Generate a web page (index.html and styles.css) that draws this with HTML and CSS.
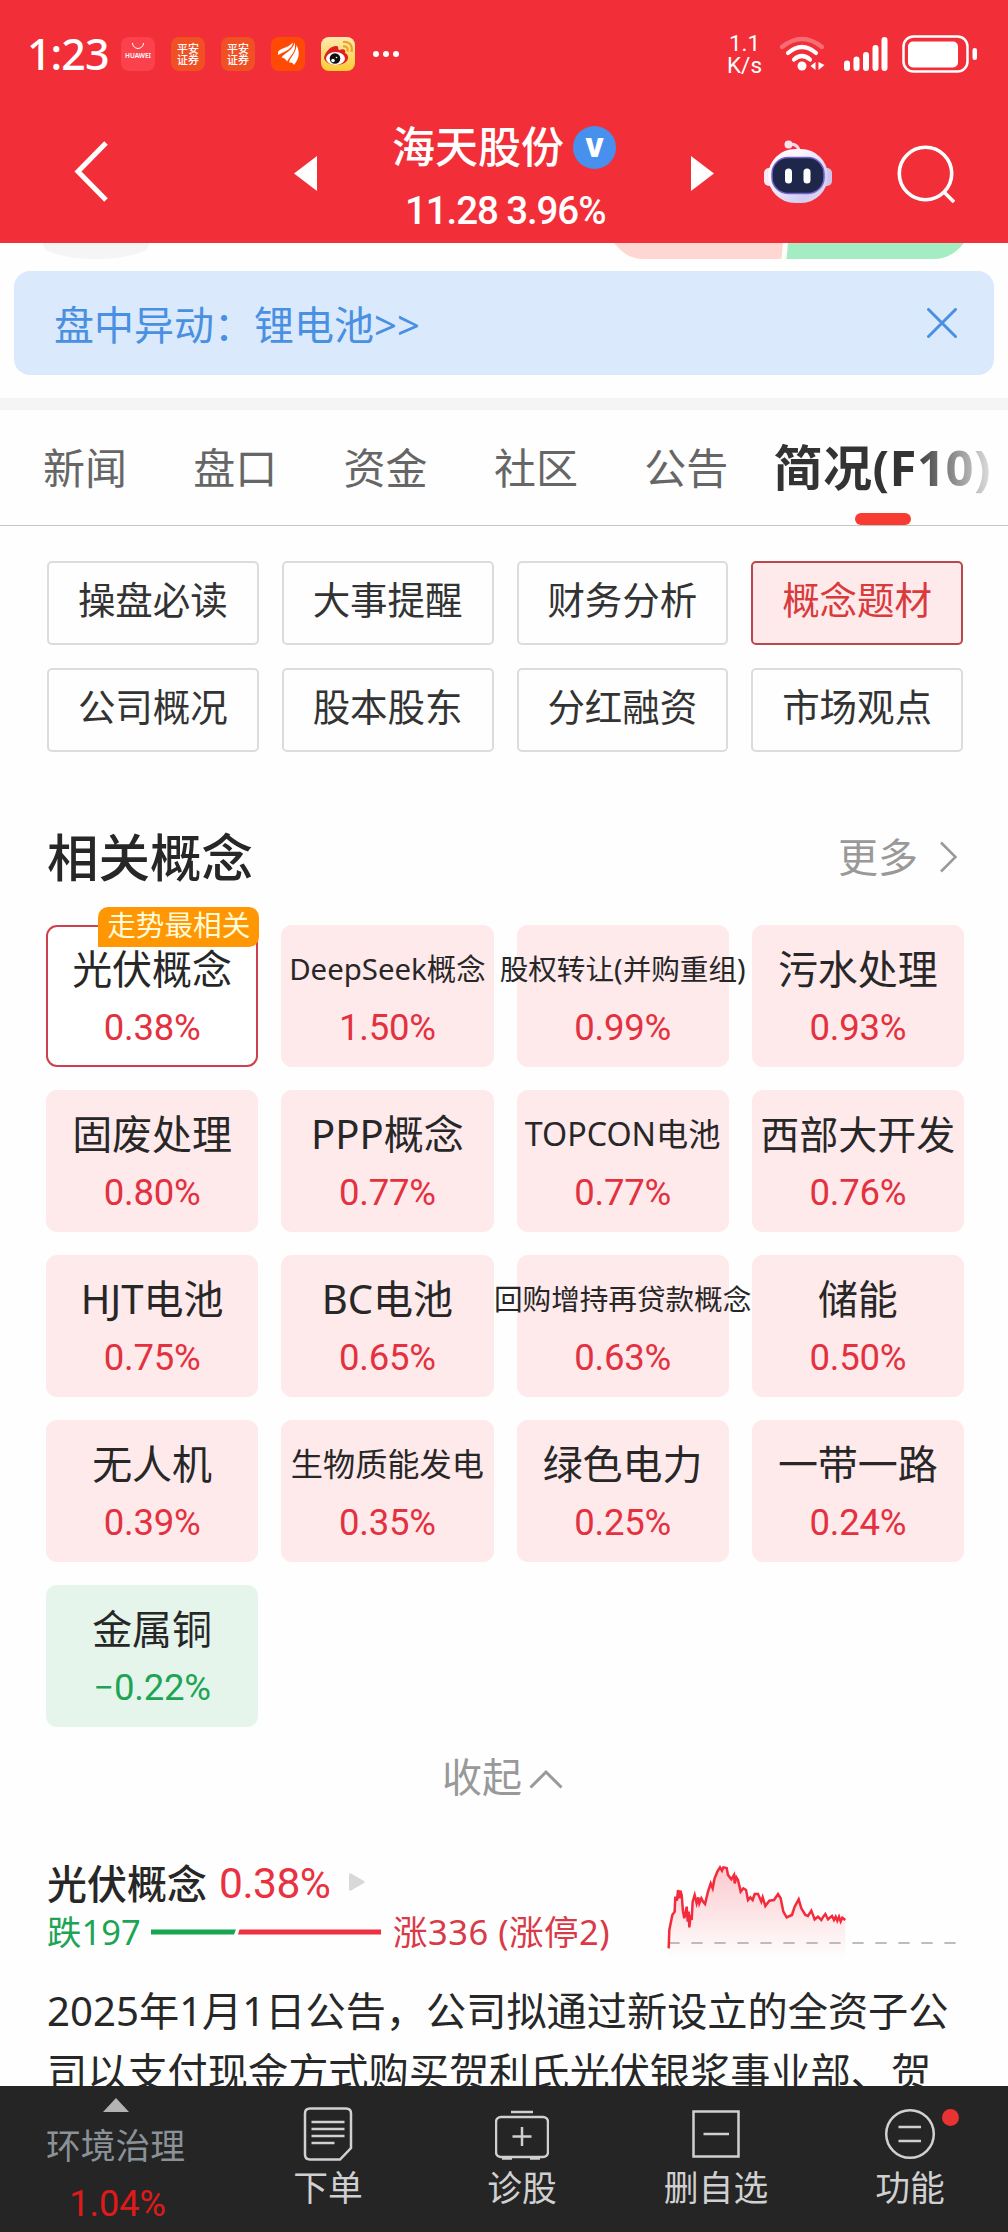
FILE: index.html
```html
<!DOCTYPE html>
<html lang="zh-CN">
<head>
    <meta charset="UTF-8">
    <meta name="viewport" content="width=device-width, initial-scale=1.0">
    <title>海天股份</title>
    <link rel="stylesheet" href="styles.css">
</head>
<body>
    <div class="phone">
        <div class="top">
            <!-- Status bar -->
            <div class="status-bar">
                <span class="time">1:23</span>
                <div class="app-icons">
                    <div class="app-icon huawei">
                        <svg width="14" height="8" viewBox="0 0 14 8" fill="none" stroke="#fff" stroke-width="1"><path d="M1.500 1a5.500 5.500 0 0 0 11 0"/></svg>
                        <span>HUAWEI</span>
                    </div>
                    <div class="app-icon pingan">平安<br>证券</div>
                    <div class="app-icon pingan">平安<br>证券</div>
                    <div class="app-icon eastmoney">
                        <svg width="34" height="34" viewBox="0 0 34 34" fill="#fff">
                            <path d="M7 15.500C8 11 16 12 22 5.500C21 12 15 14 7 18z"/>
                            <path d="M10.500 20.500C13 16 22 14 23.500 5.500C26 14 20 18 16 24.500C15 22 13 21 10.500 20.500z"/>
                            <path d="M18 25.500C19 20 25 17 25.500 8C30 17 27 23 23 28C22 26 20.500 25.500 18 25.500z"/>
                        </svg>
                    </div>
                    <div class="app-icon weibo">
                        <svg width="34" height="34" viewBox="0 0 34 34">
                            <path d="M3 21C4 14 11 8 16 9C18 10 17 13 18 13C23 11 25 13 24 16C28 18 28 22 25 25C19 30 5 29 3 21z" fill="#e01f25"/>
                            <ellipse cx="14.500" cy="21.500" rx="9.500" ry="6.500" fill="#fff"/>
                            <circle cx="14" cy="21.500" r="5.300" fill="#111"/>
                            <circle cx="12" cy="23.500" r="1.800" fill="#fff"/>
                            <circle cx="15.500" cy="20.500" r="0.800" fill="#fff"/>
                            <path d="M22 5C28 4 32 8 30.500 15M22 9.500C25.500 9 27.500 11 26.500 14.500" fill="none" stroke="#eba32c" stroke-width="2.200"/>
                        </svg>
                    </div>
                </div>
                <div class="dots"><i></i><i></i><i></i></div>
                <div class="net-speed"><span>1.1</span><span>K/s</span></div>
                <svg class="wifi" width="46" height="38" viewBox="0 0 46 38" fill="none" stroke="#fff" stroke-width="4.200" stroke-linecap="round">
                    <path d="M3 12Q23 -4 43 12" stroke-opacity="0.3"/>
                    <path d="M9 18Q23 6 37 18"/>
                    <path d="M15 24.500Q23 17.500 31 24.500"/>
                    <circle cx="23" cy="31" r="4.500" fill="#fff" stroke="none"/>
                    <path d="M36.500 27v8l-5-4zM39.500 27v8l6-5z" fill="#fff" stroke="none"/>
                </svg>
                <svg class="signal" width="44" height="36" viewBox="0 0 44 36" stroke="#fff" stroke-width="6" stroke-linecap="round">
                    <path d="M3 27.500v4.500M12.500 23.500v8.500M22 19v13M31.500 12v20M40.500 4v28"/>
                </svg>
                <svg class="battery" width="76" height="38" viewBox="0 0 76 38">
                    <rect x="1.500" y="1.500" width="64" height="35" rx="10" fill="none" stroke="#fff" stroke-width="2.500"/>
                    <rect x="6" y="6.500" width="50" height="26" rx="5" fill="#fff"/>
                    <rect x="70.500" y="13" width="4.500" height="12" rx="2.200" fill="#fff"/>
                </svg>
            </div>

            <!-- Stock header -->
            <div class="stock-header">
                <svg class="back" width="36" height="66" viewBox="0 0 36 66" fill="none" stroke="#fff" stroke-width="5"><path d="M33 4L5 32.500L33 61"/></svg>
                <svg class="prev" width="23" height="35" viewBox="0 0 23 35" fill="#fff"><path d="M23 0v35L0 17.500z"/></svg>
                <div class="stock-title">
                    <div class="stock-name">海天股份<span class="verified">V</span></div>
                    <div class="stock-price">11.28 3.96%</div>
                </div>
                <svg class="next" width="23" height="35" viewBox="0 0 23 35" fill="#fff"><path d="M0 0v35L23 17.500z"/></svg>
                <svg class="robot" width="70" height="64" viewBox="0 0 70 64">
                    <defs>
                        <linearGradient id="shell" x1="0" y1="0" x2="1" y2="1">
                            <stop offset="0.300" stop-color="#fdf6fd"/>
                            <stop offset="0.750" stop-color="#cfcdf2"/>
                            <stop offset="1" stop-color="#f5dcee"/>
                        </linearGradient>
                    </defs>
                    <path d="M36 12Q36 4 27 4" fill="none" stroke="#f5d5e6" stroke-width="3"/>
                    <circle cx="25.500" cy="4.500" r="4" fill="#fbe3ee"/>
                    <rect x="1" y="28" width="12" height="18" rx="5" fill="#f6e8f5"/>
                    <rect x="57" y="28" width="12" height="18" rx="5" fill="#cfc3ea"/>
                    <rect x="5" y="9" width="60" height="54" rx="27" fill="url(#shell)"/>
                    <rect x="9" y="17.500" width="52" height="36" rx="16" fill="#1e2749" stroke="#7363cf" stroke-width="1.500"/>
                    <rect x="22" y="28.500" width="7" height="15" rx="3.500" fill="#fff"/>
                    <rect x="40.500" y="28.500" width="7" height="15" rx="3.500" fill="#fff"/>
                </svg>
                <svg class="search" width="58" height="58" viewBox="0 0 58 58" fill="none" stroke="#fff" stroke-width="3.600"><circle cx="28.500" cy="28.500" r="26.200"/><path d="M46 46L57 57"/></svg>
            </div>
        </div>

        <!-- Bottom edges of the buttons scrolled under the header -->
        <div class="scrolled-row">
            <div class="pill-gray"></div>
            <svg width="370" height="16" viewBox="0 0 370 16">
                <path d="M4 0H173L171.500 16H34C21 16 12 10 4 0z" fill="#fed7d3"/>
                <path d="M178 0H354C346 10 336 16 324 16H176.500z" fill="#a4edc2"/>
            </svg>
        </div>

        <div class="notice">
            <span>盘中异动：锂电池&gt;&gt;</span>
            <svg width="30" height="30" viewBox="0 0 30 30" stroke="#4a90e2" stroke-width="3" stroke-linecap="round"><path d="M1.500 1.500L28.500 28.500M28.500 1.500L1.500 28.500"/></svg>
        </div>

        <div class="tabs">
            <span class="tab">新闻</span>
            <span class="tab">盘口</span>
            <span class="tab">资金</span>
            <span class="tab">社区</span>
            <span class="tab">公告</span>
            <span class="tab active"><b>简况(F10)</b></span>
        </div>

        <div class="filters">
            <div class="filter">操盘必读</div>
            <div class="filter">大事提醒</div>
            <div class="filter">财务分析</div>
            <div class="filter selected">概念题材</div>
            <div class="filter">公司概况</div>
            <div class="filter">股本股东</div>
            <div class="filter">分红融资</div>
            <div class="filter">市场观点</div>
        </div>

        <div class="section-header">
            <h2>相关概念</h2>
            <span class="more">更多</span>
            <svg width="19" height="32" viewBox="0 0 19 32" fill="none" stroke="#999" stroke-width="2.500"><path d="M2 1.500L16.500 16L2 30.500"/></svg>
        </div>

        <div class="concepts">
            <div class="concept current"><span class="badge">走势最相关</span><div class="name">光伏概念</div><div class="pct">0.38%</div></div>
            <div class="concept"><div class="name deepseek">DeepSeek概念</div><div class="pct">1.50%</div></div>
            <div class="concept"><div class="name small">股权转让(并购重组)</div><div class="pct">0.99%</div></div>
            <div class="concept"><div class="name">污水处理</div><div class="pct">0.93%</div></div>
            <div class="concept"><div class="name">固废处理</div><div class="pct">0.80%</div></div>
            <div class="concept"><div class="name">PPP概念</div><div class="pct">0.77%</div></div>
            <div class="concept"><div class="name mid">TOPCON电池</div><div class="pct">0.77%</div></div>
            <div class="concept"><div class="name wide">西部大开发</div><div class="pct">0.76%</div></div>
            <div class="concept"><div class="name">HJT电池</div><div class="pct">0.75%</div></div>
            <div class="concept"><div class="name">BC电池</div><div class="pct">0.65%</div></div>
            <div class="concept"><div class="name small">回购增持再贷款概念</div><div class="pct">0.63%</div></div>
            <div class="concept"><div class="name">储能</div><div class="pct">0.50%</div></div>
            <div class="concept"><div class="name">无人机</div><div class="pct">0.39%</div></div>
            <div class="concept"><div class="name mid">生物质能发电</div><div class="pct">0.35%</div></div>
            <div class="concept"><div class="name">绿色电力</div><div class="pct">0.25%</div></div>
            <div class="concept"><div class="name">一带一路</div><div class="pct">0.24%</div></div>
            <div class="concept down"><div class="name">金属铜</div><div class="pct">−0.22%</div></div>
        </div>

        <div class="collapse">
            <span>收起</span>
            <svg width="34" height="20" viewBox="0 0 34 20" fill="none" stroke="#999" stroke-width="3"><path d="M1.500 18.500L17 3L32.500 18.500"/></svg>
        </div>

        <!-- Concept detail -->
        <div class="detail">
            <div class="detail-info">
                <div class="detail-title">
                    <b>光伏概念</b>
                    <span class="detail-pct">0.38%</span>
                    <svg width="16" height="18" viewBox="0 0 16 18" fill="#d8d8d8"><path d="M0 1.500Q0 0 2 0.500L15 8Q16.500 9 15 10L2 17.500Q0 18 0 16.500z"/></svg>
                </div>
                <div class="detail-count">
                    <span class="fall">跌197</span>
                    <svg class="ratio" width="230" height="6" viewBox="0 0 230 6"><path d="M0 0.500H85L83 5.500H0z" fill="#1aa650"/><path d="M88.500 0.500H230V5.500H87z" fill="#ef2f42"/></svg>
                    <span class="rise">涨336 (涨停2)</span>
                </div>
            </div>
            <svg class="chart" width="298" height="100" viewBox="480 60 894 300">
                <defs>
                    <linearGradient id="area" x1="0" y1="0" x2="0" y2="1">
                        <stop offset="0" stop-color="#f42b3c" stop-opacity="0.250"/>
                        <stop offset="1" stop-color="#f42b3c" stop-opacity="0"/>
                    </linearGradient>
                </defs>
                <path fill="url(#area)" d="M494 325L505 225L522 150L542 230L556 250L572 175L603 192L620 130L648 82L668 84L682 118L702 120L732 180L752 162L784 198L822 162L848 232L884 178L904 225L932 238L1024 240V355H494z"/>
                <path d="M497 309H1356" stroke="#a8a8a8" stroke-width="5" stroke-dasharray="34 35" stroke-dashoffset="4"/>
                <polyline fill="none" stroke="#f42b3c" stroke-width="7.500" points="494,325 496,270 505,225 512,215 514,170 519,182 522,150 526,175 529,152 533,165 537,215 541,235 545,215 548,200 551,245 554,215 556,262 560,225 563,240 566,185 572,165 578,190 583,172 586,190 592,175 597,185 603,192 612,155 620,130 626,145 632,115 640,95 648,82 654,92 658,82 668,84 672,105 682,118 690,105 692,130 697,112 702,120 710,155 718,145 726,150 732,180 739,172 746,180 752,162 762,162 772,185 776,172 784,198 796,182 810,180 822,162 830,175 838,215 848,232 864,225 872,200 884,178 892,205 904,225 912,228 922,212 932,238 942,230 952,240 958,230 964,222 972,238 984,228 990,240 995,230 1000,242 1005,230 1010,244 1015,233 1024,240"/>
            </svg>
        </div>

        <p class="detail-text">2025年1月1日公告，公司拟通过新设立的全资子公<br>司以支付现金方式购买贺利氏光伏银浆事业部、贺</p>

        <!-- Bottom bar -->
        <div class="bottom-bar">
            <div class="sector">
                <svg width="26" height="14" viewBox="0 0 26 14" fill="#b3b3b3"><path d="M13 0L26 14H0z"/></svg>
                <span class="sector-name">环境治理</span>
                <span class="sector-pct">1.04%</span>
            </div>
            <div class="action">
                <svg width="54" height="54" viewBox="0 0 54 54" fill="none" stroke="#d0d0d0" stroke-width="2.500">
                    <path d="M9 1.500H45Q50 1.500 50 6.500V41L39 52.500H9Q4 52.500 4 47.500V6.500Q4 1.500 9 1.500z"/>
                    <path d="M10.500 15H43.500M10.500 22H43.500M10.500 29H43.500M10.500 36H33.500"/>
                </svg>
                <span>下单</span>
            </div>
            <div class="action">
                <svg width="54" height="54" viewBox="0 0 54 54" fill="none" stroke="#d0d0d0" stroke-width="2.500">
                    <path d="M16 5H38"/>
                    <rect x="1" y="10" width="52" height="40" rx="5"/>
                    <path d="M27 20V39M17.500 29.500H36.500M7 51.500H17M35 51.500H45"/>
                </svg>
                <span>诊股</span>
            </div>
            <div class="action">
                <svg width="54" height="54" viewBox="0 0 54 54" fill="none" stroke="#d0d0d0" stroke-width="2.500">
                    <rect x="4.500" y="4.500" width="45" height="45"/>
                    <path d="M14.500 27H40"/>
                </svg>
                <span>删自选</span>
            </div>
            <div class="action">
                <svg width="54" height="54" viewBox="0 0 54 54" fill="none" stroke="#d0d0d0" stroke-width="2.500">
                    <circle cx="27" cy="27" r="23.800"/>
                    <path d="M15.500 20H38M15.500 34H38"/>
                </svg>
                <span>功能</span>
                <i class="red-dot"></i>
            </div>
        </div>
    </div>
</body>
</html>
```

FILE: styles.css
```css
body {
    margin: 0;
    background: #fff;
    font-family: "Noto Sans", "Noto Sans CJK SC", sans-serif;
    color: #272727;
}

svg {
    display: block;
    flex: none;
}

.phone {
    width: 1008px;
    height: 2232px;
    overflow: hidden;
    display: flex;
    flex-direction: column;
    background: #fefefe;
}

.phone > div {
    flex: none;
}

/* Status bar */
.top {
    height: 243px;
    background: #f22f38;
    color: #fff;
}

.status-bar {
    display: flex;
    align-items: center;
    height: 108px;
    padding-left: 27px;
}

.time {
    width: 94px;
    font-size: 43px;
    font-weight: 500;
    line-height: 60px;
    letter-spacing: -1px;
}

.app-icons {
    display: flex;
    gap: 16px;
}

.app-icon {
    width: 34px;
    height: 34px;
    border-radius: 8px;
    overflow: hidden;
}

.huawei {
    display: flex;
    flex-direction: column;
    align-items: center;
    background: #fb424c;
    padding-top: 5px;
    height: 29px;
    font-size: 6.500px;
    line-height: 12px;
    font-weight: 600;
}

.pingan {
    background: #f15025;
    font-size: 11px;
    line-height: 11px;
    padding-top: 6px;
    height: 28px;
    text-align: center;
    font-weight: 500;
}

.eastmoney {
    background: #ff4a06;
}

.weibo {
    background: linear-gradient(#fdeab0, #fccc32);
}

.dots {
    display: flex;
    gap: 4px;
    margin-left: 18px;
    width: 355px;
}

.dots i {
    width: 6px;
    height: 6px;
    border-radius: 50%;
    background: #fff;
}

.net-speed {
    display: flex;
    flex-direction: column;
    width: 33px;
    margin-right: 18px;
    align-items: center;
    font-family: Roboto, sans-serif;
    font-size: 22.500px;
    line-height: 22px;
}

.signal {
    margin-left: 19px;
}

.battery {
    margin-left: 14px;
}

/* Stock header */
.stock-header {
    display: flex;
    height: 135px;
}

.back {
    margin: 31px 0 0 73px;
}

.prev {
    margin: 48px 0 0 185px;
}

.stock-title {
    margin-left: 75px;
    width: 299px;
}

.stock-name {
    display: flex;
    align-items: center;
    margin-top: 12px;
    font-size: 43px;
    font-weight: 500;
    line-height: 54px;
}

.verified {
    width: 43px;
    height: 43px;
    margin-left: 9px;
    border-radius: 50%;
    background: #4790ee;
    font-family: "Open Sans", sans-serif;
    font-size: 26px;
    font-weight: 800;
    line-height: 43px;
    text-align: center;
}

.stock-price {
    padding-left: 13px;
    font-family: Roboto, sans-serif;
    font-size: 38.500px;
    font-weight: 500;
    line-height: 48px;
    letter-spacing: -1.100px;
    margin-top: 13px;
    white-space: nowrap;
}

.next {
    margin-top: 48px;
}

.robot {
    margin: 32px 0 0 49px;
}

.search {
    margin: 37px 0 0 64px;
}

/* Scrolled content */
.scrolled-row {
    display: flex;
    justify-content: space-between;
    height: 28px;
    padding: 0 28px 0 43px;
}

.pill-gray {
    width: 106px;
    height: 16px;
    background: #f5f5f5;
    border-radius: 0 0 60px 60px / 0 0 16px 16px;
}

.notice {
    display: flex;
    justify-content: space-between;
    align-items: center;
    height: 104px;
    margin: 0 14px 23px;
    padding: 0 37px 0 40px;
    border-radius: 16px;
    background: #dae9fb;
    color: #4a90e2;
    font-size: 40px;
    box-sizing: border-box;
}

/* Tabs */
.tabs {
    display: flex;
    height: 115px;
    padding-left: 43px;
    border-top: 12px solid #f5f5f5;
    border-bottom: 1px solid #c4c4c4;
    font-size: 42px;
    line-height: 115px;
    color: #666;
}

.tab {
    width: 150.300px;
}

.tab.active {
    display: flex;
    flex-direction: column;
    width: 224px;
    margin-left: -21px;
}

.tab.active b {
    height: 103px;
    line-height: 115px;
    font-size: 49px;
    letter-spacing: 0.500px;
    white-space: nowrap;
    background: linear-gradient(90deg, #333 62%, #e2e2e2 98%);
    -webkit-background-clip: text;
    background-clip: text;
    color: transparent;
}

.tab.active::after {
    content: "";
    width: 56px;
    height: 12px;
    margin-left: 82px;
    border-radius: 6px;
    background: #f93c32;
}

/* Filter buttons */
.filters {
    display: grid;
    grid-template-columns: repeat(4, 1fr);
    grid-auto-rows: 84px;
    gap: 23px;
    padding: 35px 45px 0 47px;
}

.filter {
    border: 2px solid #dcdcdc;
    border-radius: 5px;
    font-size: 37.500px;
    line-height: 74px;
    text-align: center;
    color: #333;
}

.filter.selected {
    border-color: #b9474c;
    background: #feeaea;
    color: #d93a3c;
}

/* Related concepts */
.section-header {
    display: flex;
    align-items: center;
    height: 64px;
    margin-top: 73px;
    padding: 0 50px 0 47px;
}

.section-header h2 {
    flex: 1;
    margin: 0;
    font-size: 51.500px;
    font-weight: 500;
    line-height: 64px;
}

.more {
    margin-right: 21px;
    font-size: 40px;
    color: #999;
    line-height: 64px;
}

.concepts {
    display: grid;
    grid-template-columns: repeat(4, 1fr);
    grid-auto-rows: 142px;
    gap: 23px;
    padding: 36px 44px 0 46px;
}

.concept {
    position: relative;
    display: flex;
    flex-direction: column;
    align-items: center;
    gap: 19px;
    min-width: 0;
    padding-top: 24px;
    border-radius: 11px;
    background: #fee9eb;
}

.concept.current {
    background: #fff;
    box-shadow: inset 0 0 0 2px #d03f4d;
}

.concept.down {
    background: #e5f5ec;
}

.badge {
    position: absolute;
    top: -18px;
    right: -1px;
    width: 161px;
    height: 40px;
    border-radius: 10px 10px 10px 0;
    background: #ff9705;
    color: #fffbd8;
    font-size: 28.600px;
    line-height: 36px;
    text-align: center;
    white-space: nowrap;
}

.name {
    font-size: 40px;
    line-height: 40px;
    white-space: nowrap;
}

.name.small {
    font-size: 28.600px;
}

.name.deepseek {
    font-size: 29.400px;
}

.name.mid {
    font-size: 32.200px;
}

.name.wide {
    font-size: 39px;
}

.pct {
    font-family: Roboto, sans-serif;
    font-size: 36.500px;
    line-height: 40px;
    letter-spacing: -0.200px;
    color: #e33140;
}

.down .pct {
    color: #1ea455;
}

.collapse {
    display: flex;
    align-items: center;
    height: 50px;
    margin-top: 25px;
    padding-left: 442px;
    gap: 7px;
    font-size: 40px;
    line-height: 50px;
    color: #999;
}

.collapse svg {
    margin-top: 3px;
}

/* Concept detail */
.detail {
    display: flex;
    justify-content: space-between;
    height: 110px;
    margin-top: 58px;
    padding: 0 46px 0 47px;
}

.detail-title {
    display: flex;
    align-items: center;
    height: 44px;
    font-size: 40px;
}

.detail-title b {
    font-weight: 500;
}

.detail-pct {
    margin: 2px 18px 0 12px;
    font-family: Roboto, sans-serif;
    font-size: 42.500px;
    letter-spacing: -0.500px;
    color: #e93141;
}

.detail-count {
    display: flex;
    align-items: center;
    height: 52px;
    font-size: 34.500px;
    white-space: nowrap;
}

.fall {
    width: 104px;
    color: #1ea455;
}

.ratio {
    margin-top: 3px;
}

.rise {
    margin-left: 12px;
    letter-spacing: 0.500px;
    color: #d93a48;
}

.detail-text {
    flex: none;
    height: 105px;
    margin: 11px 0 0;
    padding-left: 47px;
    overflow: hidden;
    font-size: 40.200px;
    line-height: 60.500px;
    white-space: nowrap;
}

/* Bottom bar */
.bottom-bar {
    display: flex;
    height: 147px;
    margin-top: auto;
    background: #252525;
    color: #d0d0d0;
}

.sector {
    display: flex;
    flex-direction: column;
    align-items: center;
    width: 231px;
    padding-top: 12px;
}

.sector-name {
    margin-top: 9px;
    font-size: 34.800px;
    line-height: 50px;
    color: #8a9297;
}

.sector-pct {
    margin-top: 11px;
    padding-left: 4px;
    font-family: Roboto, sans-serif;
    font-size: 36px;
    line-height: 44px;
    color: #e01a1a;
}

.action {
    position: relative;
    display: flex;
    flex-direction: column;
    align-items: center;
    width: 194px;
    padding-top: 21px;
    font-size: 34.800px;
    line-height: 54px;
}

.red-dot {
    position: absolute;
    top: 23px;
    right: 48px;
    width: 17px;
    height: 17px;
    border-radius: 50%;
    background: #e93232;
}
```
